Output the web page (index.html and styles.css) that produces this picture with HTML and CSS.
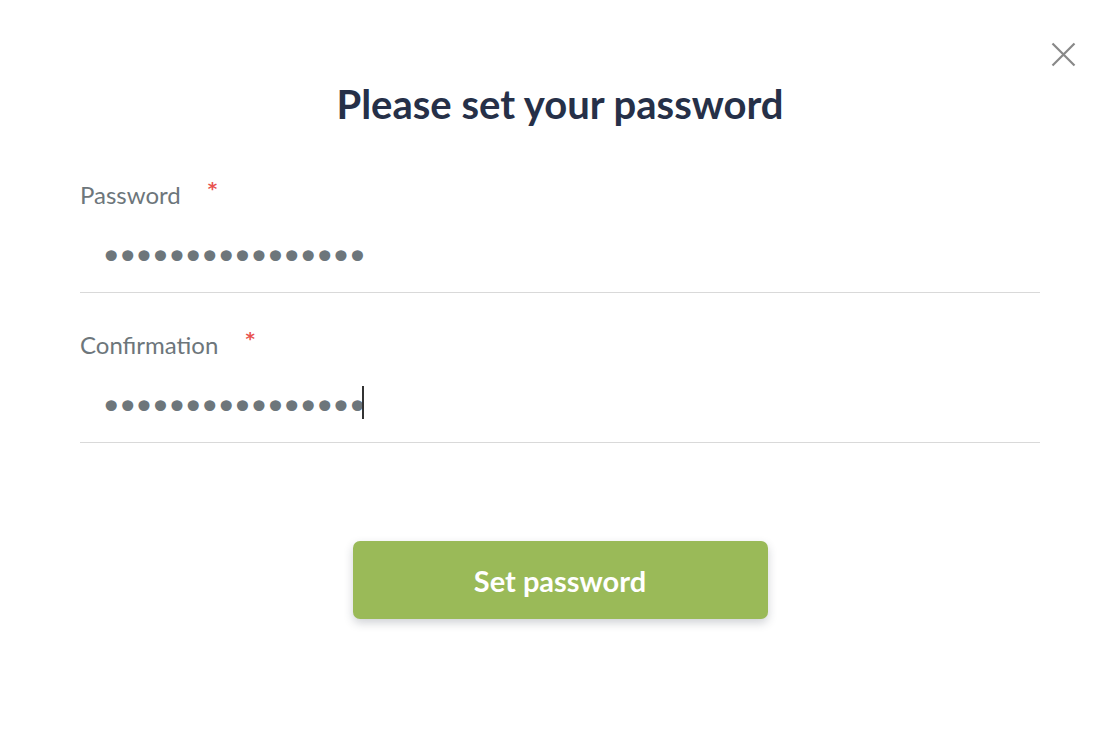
FILE: index.html
```html
<!DOCTYPE html>
<html lang="en">
<head>
<meta charset="utf-8">
<title>Please set your password</title>
<link rel="stylesheet" href="styles.css">
</head>
<body>
<div class="modal">
  <button class="close" type="button" aria-label="Close">
    <svg width="25" height="25" viewBox="0 0 25 25"><path d="M1.5 1.5 L23.5 23.5 M23.5 1.5 L1.5 23.5" stroke="#888888" stroke-width="2.2" fill="none"/></svg>
  </button>
  <h1 class="title">Please set your password</h1>
  <form class="form">
    <div class="field">
      <label class="label" for="pw">Password<span class="req">*</span></label>
      <div class="input-wrap">
        <input class="input" id="pw" type="password" value="abcdefghijklmnop">
      </div>
    </div>
    <div class="field">
      <label class="label" for="pw2">Confirmation<span class="req">*</span></label>
      <div class="input-wrap focused">
        <input class="input" id="pw2" type="password" value="abcdefghijklmnop">
        <span class="caret"></span>
      </div>
    </div>
    <div class="actions">
      <button class="submit" type="button">Set password</button>
    </div>
  </form>
</div>
</body>
</html>
```
FILE: styles.css
```css
html, body {
  margin: 0;
  padding: 0;
  background: #ffffff;
}
body {
  font-family: Lato, "Open Sans", sans-serif;
}
.modal {
  position: relative;
  width: 1118px;
  height: 730px;
  box-sizing: border-box;
  padding: 80px 78px 0 80px;
}
.close {
  position: absolute;
  top: 42px;
  right: 42px;
  width: 25px;
  height: 25px;
  padding: 0;
  border: 0;
  background: none;
  cursor: pointer;
}
.close svg { display: block; width: 25px; height: 25px; }
.title {
  margin: 0;
  font-size: 40px;
  line-height: 48px;
  font-weight: 700;
  color: #263048;
  text-align: center;
}
.form {
  display: flex;
  flex-direction: column;
  margin-top: 52px;
}
.field {
  display: flex;
  flex-direction: column;
}
.field + .field {
  margin-top: 37px;
}
.label {
  font-size: 24px;
  line-height: 30px;
  color: #6d767b;
}
.req {
  display: inline-block;
  color: #e8524f;
  font-family: "DejaVu Sans", sans-serif;
  font-weight: 700;
  font-size: 18px;
  line-height: 18px;
  vertical-align: top;
  margin-left: 27px;
  margin-top: 0;
}
.input-wrap {
  position: relative;
  margin-top: 6px;
  border-bottom: 1px solid #d9d9d9;
}
.input {
  display: block;
  width: 100%;
  height: 76px;
  box-sizing: border-box;
  border: 0;
  padding: 6px 0 0 20px;
  font-family: "DejaVu Sans", sans-serif;
  font-size: 38px;
  letter-spacing: -6px;
  color: #6d767b;
  caret-color: transparent;
  outline: none;
  background: transparent;
}
.caret {
  position: absolute;
  left: 282px;
  top: 20px;
  width: 1.5px;
  height: 33px;
  background: #333;
}
.actions {
  display: flex;
  justify-content: center;
  margin-top: 98px;
}
.submit {
  width: 415px;
  height: 78px;
  border: 0;
  border-radius: 7px;
  background: #9aba58;
  color: #ffffff;
  font-family: Lato, sans-serif;
  font-weight: 700;
  font-size: 29px;
  box-shadow: 0 4px 10px rgba(40, 50, 70, 0.22);
  cursor: pointer;
}
```
